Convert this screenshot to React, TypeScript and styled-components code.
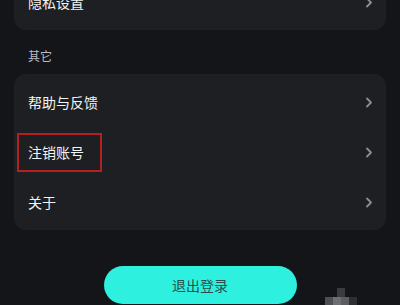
import React from 'react';
import styled, { createGlobalStyle } from 'styled-components';

const GlobalStyle = createGlobalStyle`
  html, body {
    margin: 0;
    padding: 0;
    background: #141519;
    overflow: hidden;
  }
  body {
    font-family: "Noto Sans CJK SC", "Noto Sans", sans-serif;
  }
`;

const Page = styled.div`
  position: relative;
  width: 400px;
  height: 305px;
  overflow: hidden;
  background: #141519;
  padding: 0 14px;
  box-sizing: border-box;
`;

const Card = styled.div<{ $shift?: number }>`
  background: #1e1f22;
  border-radius: 12px;
  padding: 3px 0;
  margin-top: ${p => (p.$shift ? `-${p.$shift}px` : '0')};
`;

const Row = styled.div`
  position: relative;
  height: 50px;
  display: flex;
  align-items: center;
  justify-content: space-between;
  padding: 0 13px 0 14px;
  color: #f4f4f4;
  font-size: 14px;
`;

const SectionLabel = styled.div`
  height: 44px;
  box-sizing: border-box;
  padding: 6px 0 0 14px;
  display: flex;
  align-items: center;
  color: #bcbcbe;
  font-size: 12px;
`;

const Highlight = styled.div`
  position: absolute;
  left: 3px;
  top: 6px;
  width: 85px;
  height: 39px;
  box-sizing: border-box;
  border: 2px solid #b3201f;
`;

const Footer = styled.div`
  display: flex;
  justify-content: center;
  padding-top: 36px;
`;

const LogoutButton = styled.button`
  width: 193px;
  height: 38px;
  border: none;
  border-radius: 19px;
  background: #2ef0df;
  color: #28504e;
  font-family: "Noto Sans CJK SC", sans-serif;
  font-size: 14px;
  cursor: pointer;
`;

const Mosaic = styled.svg`
  position: absolute;
  left: 325px;
  top: 288px;
`;

const Chevron = () => (
  <svg width="8" height="11" viewBox="0 0 8 11">
    <polyline
      points="2,1.5 6,5.5 2,9.5"
      fill="none"
      stroke="#8e8e90"
      strokeWidth="1.8"
      strokeLinecap="round"
      strokeLinejoin="round"
    />
  </svg>
);

const items = ['帮助与反馈', '注销账号', '关于'];

export default function App() {
  return (
    <>
      <GlobalStyle />
      <Page>
        <Card $shift={26}>
          <Row>
            <span>隐私设置</span>
            <Chevron />
          </Row>
        </Card>
        <SectionLabel>其它</SectionLabel>
        <Card>
          {items.map(label => (
            <Row key={label}>
              <span>{label}</span>
              <Chevron />
              {label === '注销账号' && <Highlight />}
            </Row>
          ))}
        </Card>
        <Footer>
          <LogoutButton>退出登录</LogoutButton>
        </Footer>
        <Mosaic width="32" height="17" viewBox="0 0 32 17">
          <rect x="12" y="0" width="8" height="9" fill="#3a3b3e" />
          <rect x="0" y="9" width="8" height="8" fill="#4e4f52" />
          <rect x="8" y="9" width="8" height="8" fill="#6e6f71" />
          <rect x="16" y="9" width="8" height="8" fill="#5c5d60" />
          <rect x="24" y="9" width="8" height="8" fill="#2e2f33" />
        </Mosaic>
      </Page>
    </>
  );
}
